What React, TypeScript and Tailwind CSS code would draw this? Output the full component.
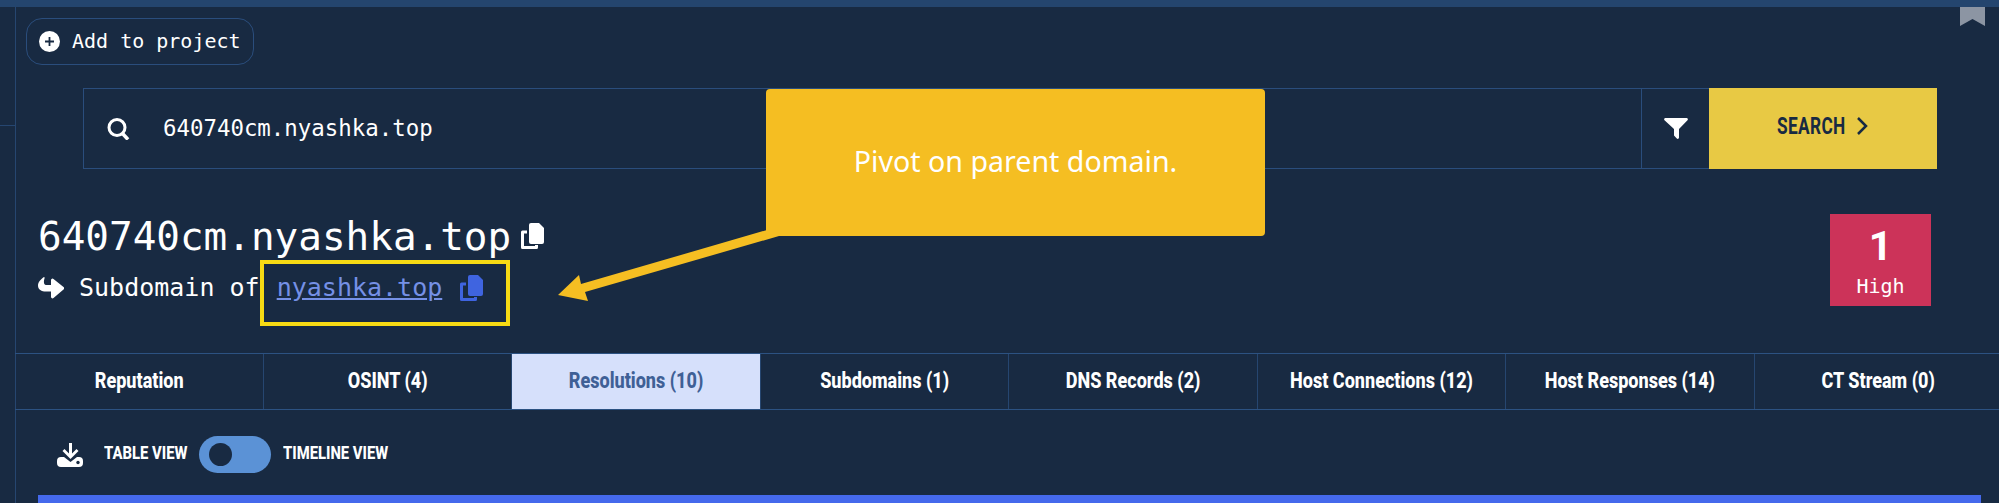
const TABS = [
  { label: "Reputation" },
  { label: "OSINT (4)" },
  { label: "Resolutions (10)", active: true },
  { label: "Subdomains (1)" },
  { label: "DNS Records (2)" },
  { label: "Host Connections (12)" },
  { label: "Host Responses (14)" },
  { label: "CT Stream (0)" },
];

function CopyIcon({ className }: { className: string }) {
  return (
    <svg viewBox="0 0 23 26" className={className} fill="currentColor">
      <path d="M10 0h8l5 5v14a2 2 0 0 1-2 2H10a2 2 0 0 1-2-2V2a2 2 0 0 1 2-2z" />
      <path d="M6 9H1.500v15.500H15.500V22" fill="none" stroke="currentColor" strokeWidth="3" strokeLinejoin="round" />
    </svg>
  );
}

function DownloadIcon() {
  return (
    <svg viewBox="0 0 26 24" className="h-[24px] w-[26px] text-white" fill="currentColor">
      <path d="M12 0h3v10.500l4.500-4.500 2 2L13.500 16 5.500 8l2-2 4.500 4.500z" />
      <path d="M4 14h3l6.500 5 6.500-5h2a4 4 0 0 1 4 4v2a4 4 0 0 1-4 4H4a4 4 0 0 1-4-4v-2a4 4 0 0 1 4-4z" />
      <circle cx="21" cy="19.500" r="1.700" fill="#182a42" />
    </svg>
  );
}

function ShareIcon() {
  return (
    <svg viewBox="0 0 26 23" className="h-[23px] w-[26px]" fill="currentColor">
      <path d="M6 0C3 2 0 5 0 8.500c0 4 3.500 6 8 6h5V20a1.500 1.500 0 0 0 2.500 1L25.500 12.500a1.500 1.500 0 0 0 0-2.500L15.500 2a1.500 1.500 0 0 0-2.500 1v5H9C6.500 8 5 6.500 6.500 1.500 6.800.500 6.500 0 6 0z" />
    </svg>
  );
}

export default function App() {
  return (
    <div className="relative flex h-[503px] w-[1999px] flex-col overflow-hidden bg-[#182a42] font-['DejaVu_Sans_Mono',monospace] text-white">
      <div className="h-[7px] shrink-0 bg-[#24456e]" />
      <div className="flex min-h-0 flex-1">
        <div className="w-[15px] shrink-0">
          <div className="h-[119px] border-b border-[#264670]" />
        </div>
        <main className="min-w-0 flex-1 border-l border-[#264670]">
          <button className="mt-[11px] ml-[10px] flex h-[47px] w-[228px] items-center gap-[12px] rounded-[16px] border border-[#2a4d7c] pl-[12px] text-[20px]">
            <svg viewBox="0 0 21 21" className="h-[21px] w-[21px]">
              <circle cx="10.500" cy="10.500" r="10.500" fill="#fff" />
              <path d="M10.500 6v9M6 10.500h9" stroke="#182a42" strokeWidth="1.800" />
            </svg>
            <span className="pb-[2px]">Add to project</span>
          </button>

          <div className="mt-[23px] ml-[67px] flex h-[81px] w-[1854px]">
            <div className="flex flex-1 items-center border border-[#2a4d7c] pl-[23px] text-[22.400px]">
              <svg viewBox="0 0 23 22" className="h-[22px] w-[23px]" fill="none" stroke="currentColor">
                <circle cx="10" cy="9.500" r="8" strokeWidth="3" />
                <path d="M15.500 15.500l5.500 6" strokeWidth="3.500" />
              </svg>
              <span className="ml-[33px]">640740cm.nyashka.top</span>
            </div>
            <div className="flex w-[67px] items-center justify-center border-y border-[#2a4d7c] pb-[1px]">
              <svg viewBox="0 0 24 21" className="h-[21px] w-[24px]" fill="currentColor">
                <path d="M1.500 0h21a1.300 1.300 0 0 1 1 2.200L15 11v8.500a1.300 1.300 0 0 1-2.200 1L10 17.500V11L.500 2.200A1.300 1.300 0 0 1 1.500 0z" />
              </svg>
            </div>
            <div className="flex w-[228px] items-center gap-[10px] bg-[#e8c944] pb-[5px] pl-[68px] text-[#182a42]">
              <span className="w-[69px] origin-left scale-x-[0.72] font-['Roboto',sans-serif] text-[24px] font-bold tracking-[0.02em] whitespace-nowrap">SEARCH</span>
              <svg viewBox="0 0 12 18" className="h-[18px] w-[12px]" fill="none" stroke="currentColor" strokeWidth="2.500">
                <path d="M2 1l8 8-8 8" />
              </svg>
            </div>
          </div>

          <div className="mt-[45px] flex h-[92px] justify-between pr-[68px] pl-[22px]">
            <div>
              <div className="flex h-[44px] items-center">
                <span className="pt-[2px] text-[39.300px] leading-[44px]">640740cm.nyashka.top</span>
                <CopyIcon className="ml-[10px] h-[26px] w-[23px]" />
              </div>
              <div className="mt-[15px] flex items-center">
                <ShareIcon />
                <span className="ml-[15px] text-[25px] leading-[30px] whitespace-pre">Subdomain of </span>
                <a className="ml-[2px] text-[25px] leading-[30px] text-[#7590e6] underline">nyashka.top</a>
                <CopyIcon className="ml-[18px] h-[26px] w-[23px] text-[#3f64e0]" />
              </div>
            </div>
            <div className="flex w-[101px] flex-col items-center bg-[#cc3359] pt-[14px]">
              <span className="font-['Roboto',sans-serif] text-[41px] leading-[36px] font-bold">1</span>
              <span className="mt-[9px] text-[20px] leading-[26px]">High</span>
            </div>
          </div>

          <div className="mt-[47px] -ml-px flex h-[57px] border-y border-[#2c5282]">
            {TABS.map((tab) => (
              <div
                key={tab.label}
                className={`flex w-[248.500px] shrink-0 items-center justify-center border-r border-[#264670] pb-[3px] ${tab.active ? "bg-[#d6e0fb] text-[#3f6096]" : "text-white"}`}
              >
                <span className="scale-x-[0.82] font-['Roboto',sans-serif] text-[22px] font-extrabold whitespace-nowrap">{tab.label}</span>
              </div>
            ))}
          </div>

          <div className="mt-[26px] flex h-[37px] items-center pl-[41px]">
            <DownloadIcon />
            <span className="ml-[21px] w-[83px] origin-left scale-x-[0.78] pb-[2px] font-['Roboto',sans-serif] text-[19px] font-extrabold whitespace-nowrap">TABLE VIEW</span>
            <div className="ml-[12px] flex h-[37px] w-[72px] items-center rounded-full bg-[#5b92d6] pl-[10px]">
              <div className="h-[23px] w-[23px] rounded-full bg-[#182a42]" />
            </div>
            <span className="ml-[12px] origin-left scale-x-[0.78] pb-[2px] font-['Roboto',sans-serif] text-[19px] font-extrabold whitespace-nowrap">TIMELINE VIEW</span>
          </div>

          <div className="mt-[22px] ml-[22px] h-[20px] w-[1943px] bg-[#4569ec]" />
        </main>
      </div>

      {/* annotations drawn over the page */}
      <div className="absolute top-[260px] left-[260px] h-[66px] w-[250px] border-4 border-[#f7da14]" />
      <svg viewBox="0 0 1999 503" className="absolute inset-0 h-[503px] w-[1999px]" fill="#f5be22">
        <path d="M558 295L579 275L581 284L767 230L779 236L585 292L588 301Z" />
      </svg>
      <div className="absolute top-[89px] left-[766px] flex h-[147px] w-[499px] items-center justify-center rounded-[4px] bg-[#f5be22] pb-[3px] font-['Noto_Sans',sans-serif] text-[28.600px] text-white">
        Pivot on parent domain.
      </div>
      <svg viewBox="0 0 25 19" className="absolute top-[7px] left-[1960px] h-[19px] w-[25px]" fill="#8c95a3">
        <path d="M0 0h25v19l-12.500-7L0 19z" />
      </svg>
    </div>
  );
}
